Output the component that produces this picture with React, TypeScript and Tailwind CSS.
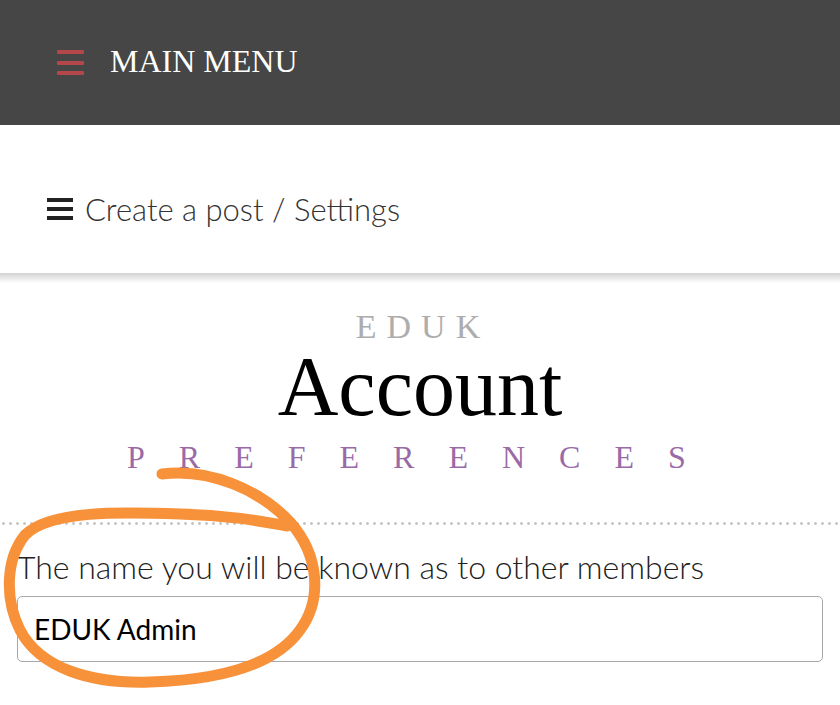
import React from "react";

const serif = { fontFamily: '"Liberation Serif", "Times New Roman", serif' };
const sans = { fontFamily: 'Lato, "Open Sans", "Noto Sans", sans-serif' };

function Bars({ className, bar }: { className: string; bar: string }) {
  return (
    <div className={`flex flex-col justify-between ${className}`}>
      <span className={`block ${bar}`} />
      <span className={`block ${bar}`} />
      <span className={`block ${bar}`} />
    </div>
  );
}

export default function App() {
  return (
    <div className="relative w-[840px] h-[705px] overflow-hidden bg-white">
      {/* Top bar */}
      <header className="h-[125px] bg-[#464646] flex items-center pl-[57px] gap-[26px]">
        <Bars className="w-[27px] h-[25px]" bar="h-[4px] bg-[#b4474a] rounded-[1px]" />
        <span className="text-[32px] text-white leading-none -mt-[3px]" style={serif}>
          MAIN MENU
        </span>
      </header>

      {/* Sub nav */}
      <nav className="h-[148px] flex items-center pl-[47px] pt-[20px] gap-[12px]">
        <Bars className="w-[26px] h-[22px]" bar="h-[4px] bg-[#222]" />
        <span className="text-[31px] font-light text-[#333] leading-none" style={sans}>
          Create a post / Settings
        </span>
      </nav>
      <div className="h-[10px] bg-linear-to-b from-[#d2d2d2] via-[#e8e8e8] to-white" />

      {/* Title */}
      <div className="flex flex-col items-center pt-[27px]" style={serif}>
        <div className="text-[34px] leading-none text-[#adadad] tracking-[10px] pl-[6px]">EDUK</div>
        <div className="text-[84px] leading-none text-black mt-[1px]">Account</div>
        <div className="text-[32px] leading-none text-[#9a6aa7] tracking-[34px] self-start pl-[127px] mt-[12px]">
          PREFERENCES
        </div>
      </div>

      {/* Dotted divider */}
      <div className="mt-[49px] h-[3px] bg-[radial-gradient(circle,#c6c6c6_1.2px,transparent_1.6px)] bg-[length:7px_3px]" />

      {/* Form field */}
      <div className="px-[17px] pt-[26px]">
        <label className="block text-[32px] font-light text-[#222] leading-none" style={sans}>
          The name you will be known as to other members
        </label>
        <div className="mt-[13px] h-[66px] border border-[#a8a8a8] rounded-[5px] flex items-center px-[16px]">
          <span className="text-[28px] text-black leading-none" style={sans}>
            EDUK Admin
          </span>
        </div>
      </div>

      {/* Hand-drawn annotation */}
      <svg className="absolute inset-0 pointer-events-none" width="840" height="705" viewBox="0 0 840 705">
        <path
          d="M162,474 C210,468 260,490 290,522 C320,556 322,600 300,630 C275,665 220,680 150,682 C90,684 40,668 20,630 C5,600 5,560 25,535 C50,510 120,512 180,514 C230,515 265,522 287,526"
          fill="none"
          stroke="#f7913a"
          strokeWidth="11"
          strokeLinecap="round"
          strokeLinejoin="round"
        />
      </svg>
    </div>
  );
}
